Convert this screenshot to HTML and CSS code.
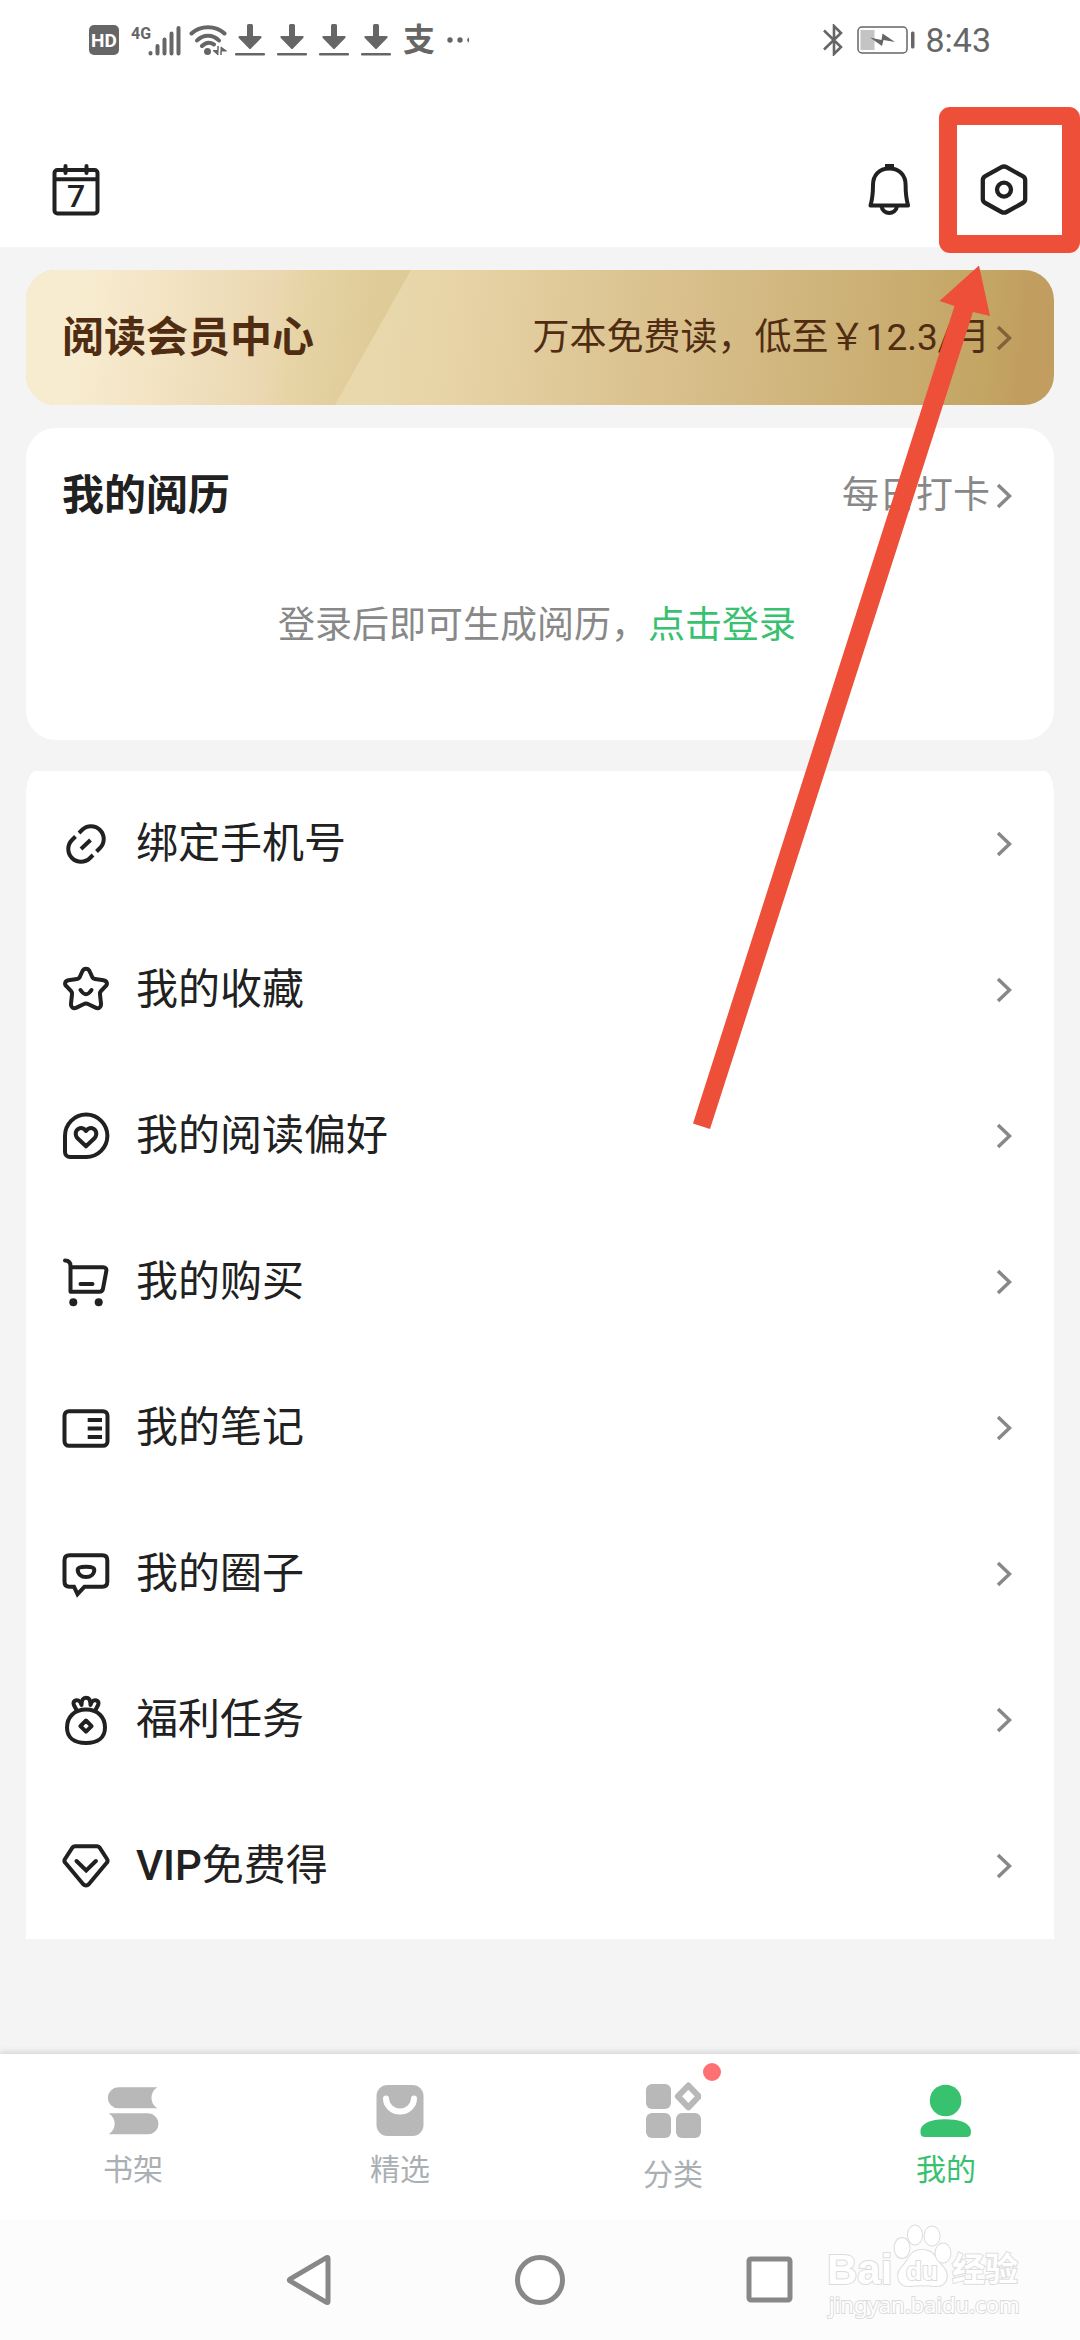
FILE: index.html
```html
<!DOCTYPE html>
<html lang="zh-CN">
<head>
<meta charset="utf-8">
<meta name="viewport" content="width=device-width, initial-scale=1">
<title>我的</title>
<link rel="stylesheet" href="styles.css">
</head>
<body>
<svg class="defs" aria-hidden="true">
  <symbol id="chevron" viewBox="0 0 16 26"><path d="M2 2 13.500 13 2 24" fill="none" stroke="currentColor" stroke-width="3.500"/></symbol>
  <symbol id="download" viewBox="0 0 30 32"><path d="M12 1.500q0-1.500 1.500-1.500h3q1.500 0 1.500 1.500V12h7.500q2 .5.500 2.200L16 24.500q-1 1-2 0L4 14.200Q2.500 12.500 4.500 12H12z" fill="currentColor"/><rect y="29" width="30" height="2.400" rx="1" fill="currentColor"/></symbol>
</svg>

<div class="status">
  <div class="status-left">
    <svg width="30" height="30" viewBox="0 0 30 30"><rect width="30" height="30" rx="5" fill="currentColor"/><text class="hd" x="15" y="22" text-anchor="middle">HD</text></svg>
    <svg class="signal" width="50" height="32" viewBox="0 0 50 32"><text class="net" x="0" y="15">4G</text><g stroke="currentColor" stroke-width="4" stroke-linecap="round"><path d="M19.500 29v.5M26.500 22v7.500M33.500 15.500v14M40.500 9.500v20M47.500 4v25.500"/></g></svg>
    <svg class="wifi" width="38" height="32" viewBox="0 0 38 32"><g fill="none" stroke="currentColor" stroke-width="4" stroke-linecap="round"><path d="M2.500 9.500C11 1 27 1 35.500 9.500M8 16.500c6-6.500 16-6.500 22 0M13 22c3.500-3.500 8-4 12-1.500"/></g><circle cx="18.500" cy="27.500" r="3.500" fill="currentColor"/><path d="M29 22v9l-5-4.500h5zM32 31v-8l5.500 4H32z" fill="currentColor" stroke="currentColor"/></svg>
    <svg width="30" height="32"><use href="#download"/></svg>
    <svg width="30" height="32"><use href="#download"/></svg>
    <svg width="30" height="32"><use href="#download"/></svg>
    <svg width="30" height="32"><use href="#download"/></svg>
    <span class="pay">支</span>
    <svg width="22" height="8" viewBox="0 0 22 8"><circle cx="3" cy="4" r="2.700" fill="currentColor"/><circle cx="13" cy="4" r="2.700" fill="currentColor"/><path d="M22 1.500q-4 2.500 0 5z" fill="currentColor"/></svg>
  </div>
  <div class="status-right">
    <svg class="bluetooth" width="20" height="32" viewBox="0 0 20 32"><path d="M1 6.500 18 23 11 30V2l7 7L1 25.500" fill="none" stroke="currentColor" stroke-width="2.600"/></svg>
    <svg width="58" height="28" viewBox="0 0 58 28"><rect x="1" y="1" width="49" height="26" rx="4" fill="none" stroke="currentColor" stroke-width="1.500"/><rect x="3.500" y="4" width="14" height="20" fill="#c4c4c4"/><path d="M13 11.500 24.500 14l1-6.500L38 16l-11.500-2-1.500 6z" fill="currentColor"/><rect x="54" y="5.500" width="3.500" height="17" rx="1.500" fill="currentColor"/></svg>
    <time class="clock">8:43</time>
  </div>
</div>

<header class="toolbar">
  <button class="icon-button" aria-label="签到">
    <svg width="48" height="52" viewBox="0 0 48 52"><g fill="none" stroke="currentColor" stroke-width="4"><rect x="2.500" y="6" width="43" height="43.500" rx="3"/><path d="M2.500 15.200h43"/><path d="M13.500 2v7M34.500 2v7" stroke-linecap="round"/></g><text class="day" x="24" y="43" text-anchor="middle">7</text></svg>
  </button>
  <div class="toolbar-end">
    <button class="icon-button" aria-label="消息">
      <svg width="44" height="52" viewBox="0 0 44 52"><rect x="17" width="9" height="6" fill="currentColor"/><g fill="none" stroke="currentColor" stroke-width="4"><path d="M21.300 4.500C11 4.500 5 11.500 5 21c0 9-.3 13-2.500 20.500h37.600c-2.200-7.500-2.500-11.500-2.500-20.500 0-9.500-6-16.500-16.300-16.500z" stroke-linejoin="round"/><path d="M13.500 42c1 9.200 14.500 9.200 15.500 0"/></g></svg>
    </button>
    <button class="icon-button" aria-label="设置">
      <svg width="48" height="52" viewBox="0 0 48 52"><g fill="none" stroke="currentColor" stroke-width="4.300"><path d="M21.500 3.200q2.500-1.400 5 0l16.200 9q2.500 1.400 2.500 4V35q0 2.600-2.500 4l-16.200 9q-2.500 1.400-5 0L5.300 39q-2.500-1.400-2.500-4V16.200q0-2.600 2.500-4z"/><circle cx="24" cy="25.600" r="7"/></g></svg>
    </button>
  </div>
</header>

<main class="content">
  <a class="banner" href="#member">
    <strong class="banner-title">阅读会员中心</strong>
    <span class="more">万本免费读，低至￥12.3/月<svg class="chevron" width="16" height="26"><use href="#chevron"/></svg></span>
  </a>

  <section class="card">
    <div class="card-head">
      <h2 class="card-title">我的阅历</h2>
      <a class="more more-muted" href="#checkin">每日打卡<svg class="chevron" width="16" height="26"><use href="#chevron"/></svg></a>
    </div>
    <p class="card-note">登录后即可生成阅历，<a class="login" href="#login">点击登录</a></p>
  </section>

  <nav class="menu" aria-label="功能">
    <a class="row" href="#phone">
      <svg class="row-icon" viewBox="0 0 48 48"><path d="m17 13 3-3a12.700 12.700 0 0 1 18 18l-3.500 3.500M31 35l-3 3a12.700 12.700 0 0 1-18-18l3.500-3.500M19 29l9.500-9"/></svg>
      <span class="row-label">绑定手机号</span><svg class="chevron" width="16" height="26"><use href="#chevron"/></svg>
    </a>
    <a class="row" href="#favorites">
      <svg class="row-icon" viewBox="0 0 48 48"><path d="M20.500 5C22 2 26 2 27.500 5l2.500 5.500c.6 1.500 1.500 2.300 3 2.500l8.500 1.200c3.500.6 4.500 3.800 2.100 6L39 25c-1 1-1.300 2-1 3.500l1 9c.3 4-2.500 5.500-5.500 4.100l-7-3.400c-1.500-.7-3.500-.7-5 0l-7 3.400C11.500 43 8.700 41.500 9 37.500l1-9c.3-1.500 0-2.500-1-3.500l-4.600-4.800c-2.400-2.200-1.400-5.400 2.100-6L15 13c1.500-.2 2.400-1 3-2.500z"/><path d="M18.500 24q5.500 8.500 11 0" stroke-linecap="round"/></svg>
      <span class="row-label">我的收藏</span><svg class="chevron" width="16" height="26"><use href="#chevron"/></svg>
    </a>
    <a class="row" href="#preferences">
      <svg class="row-icon" viewBox="0 0 48 48"><path d="M3 24a21.200 21.200 0 1 1 21 21H8a5 5 0 0 1-5-5z"/><path d="M24 34.300 15.300 26c-2.800-3.500-1.800-8.500 2.200-9.700 3-.8 5 .7 6.500 2.700 1.500-2 3.500-3.500 6.500-2.700 4 1.200 5 6.200 2.200 9.700z" stroke-linejoin="round"/></svg>
      <span class="row-label">我的阅读偏好</span><svg class="chevron" width="16" height="26"><use href="#chevron"/></svg>
    </a>
    <a class="row" href="#purchases">
      <svg class="row-icon" viewBox="0 0 48 48"><path d="M3 2.500c3.500 0 5.500 2 5.500 5.500v25.700h29q3 0 3.500-3l3.300-17.500q.7-3.900-3.300-3.900H8.500M18.500 26h12" stroke-linecap="round" stroke-linejoin="round"/><circle class="solid" cx="11.300" cy="44.300" r="4"/><circle class="solid" cx="36.700" cy="44.300" r="4"/></svg>
      <span class="row-label">我的购买</span><svg class="chevron" width="16" height="26"><use href="#chevron"/></svg>
    </a>
    <a class="row" href="#notes">
      <svg class="row-icon" viewBox="0 0 48 48"><rect x="2.500" y="7.200" width="43" height="34.600" rx="4.500"/><path d="M25.700 16H40M25.700 24.500H40M25.700 33H40"/></svg>
      <span class="row-label">我的笔记</span><svg class="chevron" width="16" height="26"><use href="#chevron"/></svg>
    </a>
    <a class="row" href="#circles">
      <svg class="row-icon" viewBox="0 0 48 48"><path d="M7.500 5.200h33q4.800 0 4.800 5v21.500q0 5-4.800 5H22.500l-7 7.500-3.500-7.500H7.500q-5 0-5-5V10.200q0-5 5-5z"/><path d="M15.700 19.500c0-2 3-2.800 8.300-2.800s8.300.8 8.300 2.800c0 4.500-3.500 7.500-8.300 7.500s-8.300-3-8.300-7.500z"/></svg>
      <span class="row-label">我的圈子</span><svg class="chevron" width="16" height="26"><use href="#chevron"/></svg>
    </a>
    <a class="row" href="#tasks">
      <svg class="row-icon" viewBox="0 0 48 48"><path d="M24 13.500c12 0 19 8 19 18 0 10-7 15.500-19 15.500S5 41.500 5 31.500c0-10 7-18 19-18z"/><path d="m14.500 14-2.600-5c-1.500-4 2-5.500 4.600-4.500q2 1 3 4.500C19.500 4 21 1.800 24 1.800S28.500 4 28.500 9q1-3.500 3-4.500c2.600-1 6.100.5 4.600 4.500l-2.600 5M24 24.500l5.600 5.600-5.600 5.600-5.600-5.600z" stroke-linejoin="round"/></svg>
      <span class="row-label">福利任务</span><svg class="chevron" width="16" height="26"><use href="#chevron"/></svg>
    </a>
    <a class="row" href="#vip">
      <svg class="row-icon" viewBox="0 0 48 48"><path d="M13 4.200h22q1.500 0 2.500 1.300L45 17q1.300 2-.3 3.800L27 42q-3 3-6 0L3.300 20.800Q1.700 19 3 17l7.500-11.500q1-1.300 2.500-1.300z"/><path d="m14.500 19 9.700 9.500 9.700-9.500" stroke-linecap="round"/></svg>
      <span class="row-label"><span class="latin">VIP</span>免费得</span><svg class="chevron" width="16" height="26"><use href="#chevron"/></svg>
    </a>
  </nav>
</main>

<nav class="tabs" aria-label="主导航">
  <a class="tab" href="#shelf">
    <svg width="56" height="56" viewBox="0 0 56 56" fill="#b8b8b8"><path d="M13.300 5.300h39.100C44.500 10 44.500 21.600 52.400 26.300H13.300a10.500 10.500 0 0 1 0-21zM3.800 31.300H43a10.500 10.500 0 0 1 0 21H3.800c7.900-5 7.900-16 0-21z"/></svg>
    书架
  </a>
  <a class="tab" href="#featured">
    <svg width="56" height="56" viewBox="0 0 56 56"><rect x="4.500" y="3" width="47" height="51" rx="11" fill="#b8b8b8"/><path d="M14 16.500a14 13 0 0 0 28 0" fill="none" stroke="#fff" stroke-width="6" stroke-linecap="round"/></svg>
    精选
  </a>
  <a class="tab" href="#category">
    <span class="badged"><svg width="56" height="61" viewBox="0 0 56 61" fill="#b8b8b8"><rect x="1" y="2" width="25" height="25" rx="6"/><rect x="1" y="31" width="25" height="25" rx="6"/><rect x="31" y="31" width="25" height="25" rx="6"/><path d="m43.400 3.500 10.500 10.900-10.500 10.900-10.500-10.900z" fill="none" stroke="#b8b8b8" stroke-width="6" stroke-linejoin="round"/></svg><i class="dot"></i></span>
    分类
  </a>
  <a class="tab tab-active" href="#mine" aria-current="page">
    <svg width="56" height="56" viewBox="0 0 56 56" fill="#38c16f"><circle cx="27.600" cy="18.500" r="15.800"/><path d="M2.500 48C4 40 16 37.300 27.600 37.300S51.300 40 52.900 48v2.500q0 4.500-4.500 4.500H7q-4.500 0-4.500-4.500z"/></svg>
    我的
  </a>
</nav>

<div class="system">
  <button class="icon-button" aria-label="返回"><svg width="50" height="50" viewBox="0 0 50 50"><path d="M43 3.500v43q0 1.500-1.500.8L5 26q-1.500-1 0-2L41.500 2.700Q43 2 43 3.500z"/></svg></button>
  <button class="icon-button" aria-label="主页"><svg width="50" height="50" viewBox="0 0 50 50"><circle cx="25" cy="25" r="22.500"/></svg></button>
  <button class="icon-button" aria-label="最近任务"><svg width="50" height="50" viewBox="0 0 50 50"><rect x="4" y="4" width="41" height="41" rx="2"/></svg></button>
  <svg class="watermark" width="204" height="100" viewBox="0 0 204 100">
    <g class="wm">
      <text class="wm-bold" x="5" y="59">Bai</text>
      <path d="M100 25c-12 0-13 10-19 16-8 7-6 21 7 20 8-1 16-1 25 0 12 1 15-11 8-19-7-7-8-17-21-17z"/>
      <ellipse cx="80" cy="23" rx="7.500" ry="10"/><ellipse cx="93" cy="10" rx="7" ry="9.500"/><ellipse cx="110" cy="11" rx="7.500" ry="9.500"/><ellipse cx="121" cy="28" rx="7.500" ry="9.500"/>
      <text class="wm-du" x="84" y="55">du</text>
      <text class="wm-cjk" x="130" y="56">经验</text>
      <text class="wm-url" x="7" y="88">jingyan.baidu.com</text>
    </g>
  </svg>
</div>

<svg class="callout" width="390" height="1130" viewBox="690 0 390 1130" aria-hidden="true"><rect x="948" y="116" width="123" height="128" rx="2" fill="none" stroke="#ed4f39" stroke-width="18" stroke-linejoin="round"/><path d="M979 265.500 990 316l-17-4L710 1129l-17-5.500L954.500 306l-15-5z" fill="#ed4f39"/></svg>
</body>
</html>
```
FILE: styles.css
```css
* {
  box-sizing: border-box;
}

body {
  position: relative;
  display: flex;
  flex-direction: column;
  min-height: 100vh;
  margin: 0;
  background: #f4f4f4;
  color: #212121;
  font-family: Roboto, "Noto Sans CJK SC", sans-serif;
  font-size: 42px;
  line-height: 60px;
}

a {
  color: inherit;
  text-decoration: none;
}

svg {
  flex: none;
  display: block;
}

.defs {
  position: absolute;
  width: 0;
  height: 0;
}

.icon-button {
  padding: 0;
  border: 0;
  background: none;
  color: inherit;
}

/* Status bar */
.status {
  display: flex;
  justify-content: space-between;
  align-items: center;
  height: 80px;
  padding: 0 89px;
  background: #fff;
  color: #666;
}

.status-left {
  display: flex;
  align-items: center;
  gap: 12px;
}

.status-right {
  display: flex;
  align-items: center;
  gap: 10px;
}

.signal,
.wifi,
.bluetooth {
  margin-right: 4px;
}

.signal,
.wifi {
  margin-right: -4px;
}

.hd {
  fill: #fff;
  font: 700 19px Roboto, sans-serif;
}

.net {
  fill: currentColor;
  font: 700 16px Roboto, sans-serif;
}

.pay {
  font-size: 32px;
  font-weight: 700;
  line-height: 32px;
}

.clock {
  font-size: 34px;
  line-height: 40px;
}

/* Toolbar */
.toolbar {
  display: flex;
  justify-content: space-between;
  padding: 84px 52px 31px;
  background: #fff;
}

.toolbar-end {
  display: flex;
  gap: 68px;
}

.day {
  fill: currentColor;
  font: 500 32px Roboto, sans-serif;
}

/* Content */
.content {
  flex: 1;
  padding: 23px 26px 0;
}

.banner {
  position: relative;
  display: flex;
  justify-content: space-between;
  align-items: center;
  height: 135px;
  padding: 0 42px 0 36px;
  overflow: hidden;
  border-radius: 30px;
  background: linear-gradient(96deg, #e8d8ab 34%, #e7d3a6 42%, #d5bb86 68%, #c3a564 93%, #c19d5f 97%);
  color: #502d12;
}

.banner::before {
  content: "";
  position: absolute;
  inset: 0 auto 0 0;
  width: 385px;
  background: linear-gradient(98deg, #f8ecd0 15%, #ebd8b2 62%, #e7d5a7 68%, #dfcb98 88%);
  clip-path: polygon(0 0, 100% 0, 309px 100%, 0 100%);
}

.banner-title {
  position: relative;
  font-weight: 700;
}

.more {
  display: flex;
  align-items: center;
  gap: 6px;
  font-size: 37px;
}

.more-muted {
  color: #888;
}

.chevron {
  color: #888;
}

.banner .chevron {
  color: #836139;
}

.card {
  margin-top: 23px;
  padding: 38px 42px 84px 36px;
  border-radius: 30px;
  background: #fff;
}

.card-head {
  display: flex;
  justify-content: space-between;
  align-items: center;
}

.card-title {
  margin: 0;
  font-size: 42px;
  font-weight: 700;
}

.card-note {
  margin: 70px 0 0;
  color: #888;
  font-size: 37px;
  text-align: center;
}

.login {
  color: #38c16f;
}

.menu {
  margin-top: 31px;
  border-radius: 10px 10px 0 0 / 24px 24px 0 0;
  background: #fff;
}

.row {
  display: flex;
  align-items: center;
  gap: 26px;
  height: 146px;
  padding: 0 42px 0 36px;
}

.row-icon {
  width: 48px;
  height: 48px;
  overflow: visible;
  fill: none;
  stroke: currentColor;
  stroke-width: 4;
}

.solid {
  fill: currentColor;
  stroke: none;
}

.row-label {
  flex: 1;
}

.latin {
  font-weight: 500;
}

/* Bottom tabs */
.tabs {
  display: grid;
  grid-template-columns: 133fr 134fr 139fr 134fr;
  height: 166px;
  padding-top: 28px;
  background: #fff;
  box-shadow: 0 -2px 6px #d4d4d4;
}

.tab {
  display: flex;
  flex-direction: column;
  align-items: center;
  gap: 12px;
  color: #aaafb3;
  font-size: 30px;
  line-height: 40px;
}

.tab-active {
  color: #38c16f;
}

.badged {
  position: relative;
}

.dot {
  position: absolute;
  top: -19px;
  right: -20px;
  width: 18px;
  height: 18px;
  border-radius: 50%;
  background: #fd7172;
}

/* System navigation */
.system {
  position: relative;
  display: flex;
  justify-content: center;
  align-items: center;
  gap: 180px;
  height: 120px;
  background: #fcfcfc;
  fill: #fff;
  stroke: #888;
  stroke-width: 5;
}

.watermark {
  position: absolute;
  top: 5px;
  right: 54px;
  overflow: visible;
}

.wm {
  fill: #fff;
  stroke: #dcdcdc;
  stroke-width: 2;
  paint-order: stroke;
}

.wm-bold {
  font: 700 42px "Liberation Sans", sans-serif;
}

.wm-du {
  font: 700 26px "Liberation Sans", sans-serif;
}

.wm-cjk {
  font: 700 33px "Noto Sans CJK SC", sans-serif;
}

.wm-url {
  font: 400 22px "Noto Sans", sans-serif;
}

/* Highlight drawn over the page */
.callout {
  position: absolute;
  top: 0;
  right: 0;
  pointer-events: none;
}
```
